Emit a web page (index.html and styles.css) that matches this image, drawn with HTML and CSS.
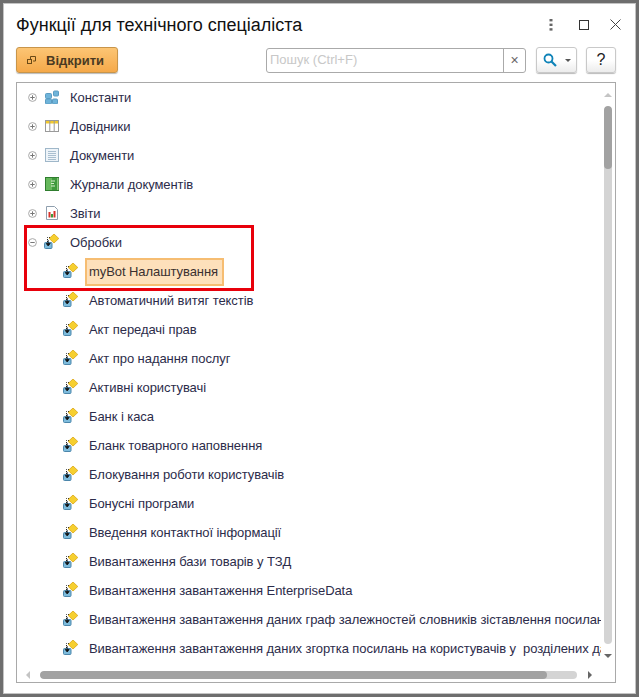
FILE: index.html
```html
<!DOCTYPE html>
<html lang="uk">
<head>
<meta charset="utf-8">
<title>Функції для технічного спеціаліста</title>
<link rel="stylesheet" href="styles.css">
</head>
<body>
<svg class="defs" width="0" height="0">
  <defs>
    <symbol id="proc" viewBox="0 0 15 15">
      <path d="M3.500 8V3.500H6" fill="none" stroke="#222" stroke-width="1" stroke-dasharray="1 1"/>
      <path d="M10 0L14.800 4.500L10 9L5.200 4.500Z" fill="#f6cf2f" stroke="#d9a514" stroke-width=".8"/>
      <rect x="0.500" y="8.500" width="7.500" height="6" rx="1" fill="#7dbbdc" stroke="#4b86ab"/>
      <path d="M4.200 6V9.500M2.200 9.500H6.200L4.200 12Z" fill="#111" stroke="#111" stroke-width=".8"/>
    </symbol>
    <symbol id="plus" viewBox="0 0 9 9">
      <circle cx="4.500" cy="4.500" r="3.900" fill="#fff" stroke="#a8a8a8"/>
      <path d="M2.300 4.500H6.700M4.500 2.300V6.700" stroke="#777" stroke-width="1"/>
    </symbol>
    <symbol id="minus" viewBox="0 0 9 9">
      <circle cx="4.500" cy="4.500" r="3.900" fill="#fff" stroke="#a8a8a8"/>
      <path d="M2.300 4.500H6.700" stroke="#777" stroke-width="1"/>
    </symbol>
  </defs>
</svg>
<div class="window">
  <header class="titlebar">
    <h1 class="title">Функції для технічного спеціаліста</h1>
    <div class="winctl">
      <svg class="ctl ctl-dots" width="4" height="14" viewBox="0 0 4 14"><g fill="#666"><rect x="0.500" y="1" width="3" height="2.400"/><rect x="0.500" y="5.600" width="3" height="2.400"/><rect x="0.500" y="10.200" width="3" height="2.400"/></g></svg>
      <svg class="ctl ctl-max" width="10" height="10" viewBox="0 0 10 10"><rect x="0.500" y="0.500" width="9" height="9" fill="none" stroke="#333"/></svg>
      <svg class="ctl ctl-close" width="11" height="11" viewBox="0 0 11 11"><path d="M.5.5L10.500 10.500M10.500.5L.5 10.500" stroke="#444" stroke-width="1"/></svg>
    </div>
  </header>
  <div class="toolbar">
    <button class="btn-open" type="button">
      <svg width="9" height="8" viewBox="0 0 9 8"><path d="M3.500 3V.5H8.500V5H6" fill="none" stroke="#6b4a16"/><rect x=".5" y="3.500" width="4" height="4" fill="none" stroke="#6b4a16"/></svg>
      <span>Відкрити</span>
    </button>
    <div class="search">
      <div class="search-input">Пошук (Ctrl+F)</div>
      <div class="search-clear">×</div>
    </div>
    <button class="btn-tool btn-find" type="button">
      <svg width="14" height="14" viewBox="0 0 14 14"><circle cx="5.500" cy="5.500" r="4" fill="none" stroke="#0f83b8" stroke-width="1.800"/><path d="M8.500 8.500L13 13" stroke="#0f83b8" stroke-width="2.200"/></svg>
      <i class="caret"></i>
    </button>
    <button class="btn-tool btn-help" type="button">?</button>
  </div>
  <main class="tree">
    <ul class="rows">
      <li class="row"><svg class="tog"><use href="#plus"/></svg>
        <svg class="ico" viewBox="0 0 14 14"><rect x=".5" y="3.500" width="6" height="5" rx="1" fill="#6fb4da" stroke="#5b9cc2"/><rect x=".5" y="9" width="6" height="5" rx="1" fill="#6fb4da" stroke="#5b9cc2"/><rect x="7.500" y="9" width="5" height="5" rx="1" fill="#6fb4da" stroke="#5b9cc2"/><rect x="8.500" y="1" width="5" height="5" rx="1" fill="#6fb4da" stroke="#5b9cc2"/></svg>
        <span class="lbl">Константи</span></li>
      <li class="row"><svg class="tog"><use href="#plus"/></svg>
        <svg class="ico" viewBox="0 0 14 14"><rect x=".5" y="1.500" width="13" height="11" fill="#fff" stroke="#9a9a9a"/><rect x="1" y="2" width="12" height="2.500" fill="#f2c92f"/><path d="M4.800 2V12M9.200 2V12" stroke="#9a9a9a"/></svg>
        <span class="lbl">Довідники</span></li>
      <li class="row"><svg class="tog"><use href="#plus"/></svg>
        <svg class="ico" viewBox="0 0 14 14"><rect x=".5" y=".5" width="13" height="13" fill="#eef4f9" stroke="#9fb7c9"/><path d="M3 3.500H11M3 5.500H11M3 7.500H11M3 9.500H11M3 11.500H11" stroke="#a9bfd0"/></svg>
        <span class="lbl">Документи</span></li>
      <li class="row"><svg class="tog"><use href="#plus"/></svg>
        <svg class="ico" viewBox="0 0 14 14"><rect x=".5" y=".5" width="13" height="13" fill="#3f9a3d" stroke="#2f7d2e"/><rect x="1" y="1" width="6" height="12" fill="#66b85c"/><path d="M6 4H10M6 6.500H9M6 9H10" stroke="#d6eccd"/><rect x="12" y="1" width="1.500" height="12" fill="#8cc97f"/></svg>
        <span class="lbl">Журнали документів</span></li>
      <li class="row"><svg class="tog"><use href="#plus"/></svg>
        <svg class="ico" viewBox="0 0 14 14"><path d="M1.500.5H9.500L12.500 3.500V13.500H1.500Z" fill="#fff" stroke="#8f9fae"/><rect x="3.500" y="6" width="2" height="5.500" fill="#d8342c"/><rect x="6" y="8" width="2" height="3.500" fill="#3e9c3a"/><rect x="8.500" y="5" width="2" height="6.500" fill="#d8342c"/></svg>
        <span class="lbl">Звіти</span></li>
      <li class="row"><svg class="tog"><use href="#minus"/></svg>
        <svg class="ico proc"><use href="#proc"/></svg>
        <span class="lbl">Обробки</span></li>
      <li class="row child"><svg class="ico proc"><use href="#proc"/></svg><span class="lbl sel">myBot Налаштування</span></li>
      <li class="row child"><svg class="ico proc"><use href="#proc"/></svg><span class="lbl">Автоматичний витяг текстів</span></li>
      <li class="row child"><svg class="ico proc"><use href="#proc"/></svg><span class="lbl">Акт передачі прав</span></li>
      <li class="row child"><svg class="ico proc"><use href="#proc"/></svg><span class="lbl">Акт про надання послуг</span></li>
      <li class="row child"><svg class="ico proc"><use href="#proc"/></svg><span class="lbl">Активні користувачі</span></li>
      <li class="row child"><svg class="ico proc"><use href="#proc"/></svg><span class="lbl">Банк і каса</span></li>
      <li class="row child"><svg class="ico proc"><use href="#proc"/></svg><span class="lbl">Бланк товарного наповнення</span></li>
      <li class="row child"><svg class="ico proc"><use href="#proc"/></svg><span class="lbl">Блокування роботи користувачів</span></li>
      <li class="row child"><svg class="ico proc"><use href="#proc"/></svg><span class="lbl">Бонусні програми</span></li>
      <li class="row child"><svg class="ico proc"><use href="#proc"/></svg><span class="lbl">Введення контактної інформації</span></li>
      <li class="row child"><svg class="ico proc"><use href="#proc"/></svg><span class="lbl">Вивантаження бази товарів у ТЗД</span></li>
      <li class="row child"><svg class="ico proc"><use href="#proc"/></svg><span class="lbl">Вивантаження завантаження EnterpriseData</span></li>
      <li class="row child"><svg class="ico proc"><use href="#proc"/></svg><span class="lbl">Вивантаження завантаження даних граф залежностей словників зіставлення посилань</span></li>
      <li class="row child"><svg class="ico proc"><use href="#proc"/></svg><span class="lbl">Вивантаження завантаження даних згортка посилань на користувачів у&nbsp; розділених даних</span></li>
    </ul>
    <div class="vscroll">
      <i class="arr arr-up"></i>
      <div class="v-track"><div class="v-thumb"></div></div>
      <i class="arr arr-down"></i>
    </div>
    <div class="hscroll">
      <i class="arr arr-left"></i>
      <div class="h-track"><div class="h-thumb"></div></div>
      <i class="arr arr-right"></i>
    </div>
    <div class="highlight"></div>
  </main>
</div>
</body>
</html>
```
FILE: styles.css
```css
* { box-sizing: border-box; }
html, body { margin: 0; padding: 0; height: 100%; }
body { background: #fff; font-family: "Liberation Sans", Arial, sans-serif; overflow: hidden; }
.defs { position: absolute; }
.window {
  width: 639px; height: 697px;
  border-style: solid; border-color: #6e6e6e; border-width: 3px 3px 4px 3px;
  outline: 1px solid #c4c4c4; outline-offset: -4px;
  background: #fff;
  display: flex; flex-direction: column;
  padding: 0 20px 10px 13px;
}
.titlebar { height: 44px; display: flex; align-items: center; justify-content: space-between; flex: none; padding-bottom: 1px; }
.title { margin: 0; font-size: 18px; font-weight: 400; color: #111; line-height: 22px; }
.winctl { display: flex; align-items: center; margin-right: -5px; }
.ctl { display: block; }
.ctl-dots { margin-right: 26px; }
.ctl-max { margin-right: 21px; }
.toolbar { height: 35px; flex: none; display: flex; align-items: flex-start; }
.btn-open {
  width: 102px; height: 26px; padding: 0 0 0 10px; margin: 0;
  display: flex; align-items: center; gap: 10px;
  background: linear-gradient(#fcc574, #f5a94a);
  border: 1px solid #c8954a; border-radius: 3px;
  box-shadow: 0 1px 1px #bbb;
  font: 700 13px "Liberation Sans", Arial, sans-serif; color: #4a3a22;
}
.search {
  width: 260px; height: 25px; margin: 1px 0 0 148px;
  display: flex; border: 1px solid #aaa; border-radius: 3px; background: #fff;
}
.search-input { flex: 1; font-size: 13px; line-height: 22px; padding-left: 3px; color: #c8c8c8; border-right: 1px solid #aaa; }
.search-clear { width: 21px; text-align: center; font-size: 14px; line-height: 22px; color: #666; }
.btn-tool {
  height: 26px; margin-top: 0; padding: 0;
  border: 1px solid #c9c9c9; border-radius: 3px;
  background: linear-gradient(#fff 50%, #ececec);
  box-shadow: 0 1px 1px #bbb;
  display: flex; align-items: center; justify-content: center;
}
.btn-find { width: 41px; margin-left: 10px; gap: 8px; padding-left: 1px; }
.caret { width: 0; height: 0; border: 3px solid transparent; border-top: 3px solid #555; border-bottom: 0; }
.btn-help { width: 30px; margin-left: 9px; font: 400 16px "Liberation Sans", Arial, sans-serif; color: #222; }
.tree {
  position: relative; flex: 1; width: 600px; min-height: 0; overflow: hidden;
  border: 1px solid #a9a9a9; background: #fff;
}
.rows { list-style: none; margin: 0; padding: 0; width: 584px; overflow: hidden; }
.row { height: 29px; display: flex; align-items: center; padding-left: 11px; white-space: nowrap; font-size: 13px; letter-spacing: -.07px; color: #2c2c4a; }
.child { padding-left: 46px; }
.tog { width: 9px; height: 9px; flex: none; margin-right: 8px; }
.ico { width: 14px; height: 14px; flex: none; margin-right: 11px; margin-top: -1px; }
.ico.proc { width: 15px; height: 15px; margin: -2px 11px 0 -1px; }
.child .ico.proc { margin: -2px 7px 0 0; }
.child .lbl { margin-left: 4px; }
.child .sel {
  background: #fde0bb; border: 2px solid #f6bd72; color: #3a3030;
  height: 28px; line-height: 24px; padding: 0 4px 0 2px; margin-left: 0;
}
.vscroll { position: absolute; right: 3px; top: 10px; width: 8px; height: 565px; display: flex; flex-direction: column; align-items: center; }
.v-track { width: 8px; flex: 1; margin: 9px 0 10px; background: #d4d4d4; border-radius: 4px; overflow: hidden; }
.v-thumb { height: 63px; background: #a2a2a2; border-radius: 4px; }
.hscroll { position: absolute; left: 9px; bottom: 3px; width: 575px; height: 8px; display: flex; align-items: center; }
.h-track { height: 8px; width: 537px; flex: none; margin: 0 11px 0 10px; background: #d4d4d4; border-radius: 4px; overflow: hidden; }
.h-thumb { width: 507px; height: 8px; background: #a2a2a2; border-radius: 4px; }
.arr { display: block; width: 0; height: 0; flex: none; border: 4px solid transparent; }
.arr-up { border-width: 0 4px 4px; border-bottom-color: #c4c4c4; }
.arr-down { border-width: 4px 4px 0; border-top-color: #666; }
.arr-left { border-width: 4px 4px 4px 0; border-right-color: #c4c4c4; }
.arr-right { border-width: 4px 0 4px 4px; border-left-color: #666; }
.highlight { position: absolute; left: 7px; top: 142px; width: 230px; height: 66px; border: 3px solid #e8000b; pointer-events: none; }
```
